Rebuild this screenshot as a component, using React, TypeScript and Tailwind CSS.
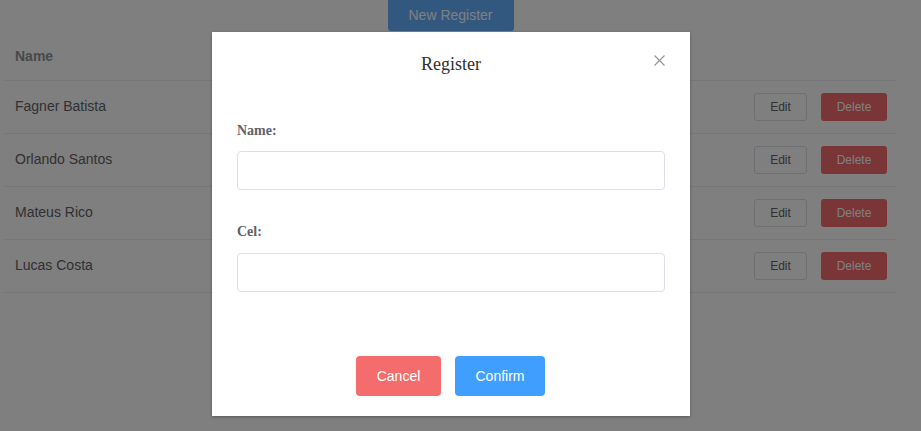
import React from 'react';

const people = ['Fagner Batista', 'Orlando Santos', 'Mateus Rico', 'Lucas Costa'];

export default function App() {
  return (
    <div className="relative h-[431px] w-[921px] overflow-hidden bg-white font-['Liberation_Sans',Arial,sans-serif]">
      {/* Page behind the modal */}
      <div className="ml-[4px] w-[893px]">
        <div className="flex justify-center">
          <button className="h-[31px] w-[126px] rounded-b-[3px] bg-[#66b1ff] text-[14px] text-white">
            New Register
          </button>
        </div>
        <table className="w-full border-collapse text-[14px]">
          <thead>
            <tr className="h-[49px] border-b border-[#ebeef5]">
              <th className="pl-[11px] pt-[2px] text-left font-bold text-[#909399]">Name</th>
              <th />
            </tr>
          </thead>
          <tbody>
            {people.map(name => (
              <tr key={name} className="h-[53px] border-b border-[#ebeef5]">
                <td className="pl-[11px] text-[#606266]">{name}</td>
                <td className="pr-[10px]">
                  <div className="flex items-center justify-end gap-[14px]">
                    <button className="h-[28px] w-[53px] rounded-[3px] border border-[#dcdfe6] bg-white text-[12px] text-[#606266]">
                      Edit
                    </button>
                    <button className="h-[28px] w-[66px] rounded-[3px] bg-[#f56c6c] text-[12px] text-white">
                      Delete
                    </button>
                  </div>
                </td>
              </tr>
            ))}
          </tbody>
        </table>
      </div>

      {/* Overlay + dialog */}
      <div className="absolute inset-0 flex justify-center bg-black/50 pr-[19px]">
        <div className="mt-[32px] flex h-[384px] w-[478px] flex-col bg-white px-[25px] pt-[20px] pb-[20px] shadow-[0_1px_3px_rgba(0,0,0,0.3)]">
          <div className="relative flex h-[24px] items-center justify-center">
            <h2 className="font-['Liberation_Serif','Times_New_Roman',serif] text-[18px] leading-[24px] text-[#303133]">
              Register
            </h2>
            <button className="absolute right-0 top-[2px] flex h-[12px] w-[12px] items-center justify-center">
              <svg width="11" height="11" viewBox="0 0 11 11" fill="none" stroke="#909399" strokeWidth="1.1">
                <path d="M0.5 0.5 L10.5 10.5 M10.5 0.5 L0.5 10.5" />
              </svg>
            </button>
          </div>

          <label className="mt-[44px] pt-[1px] font-['Liberation_Serif','Times_New_Roman',serif] text-[14px] font-bold leading-[19px] text-[#606266]">
            Name:
          </label>
          <input className="mt-[11px] h-[40px] w-full rounded-[4px] border border-[#dcdfe6] px-[15px] outline-none" />

          <label className="mt-[32px] font-['Liberation_Serif','Times_New_Roman',serif] text-[14px] font-bold leading-[20px] text-[#606266]">
            Cel:
          </label>
          <input className="mt-[11px] h-[40px] w-full rounded-[4px] border border-[#dcdfe6] px-[15px] outline-none" />

          <div className="mt-[64px] flex justify-center gap-[14px] pr-[1px]">
            <button className="h-[40px] w-[85px] rounded-[4px] bg-[#f56c6c] text-[14px] text-white">Cancel</button>
            <button className="h-[40px] w-[90px] rounded-[4px] bg-[#409eff] text-[14px] text-white">Confirm</button>
          </div>
        </div>
      </div>
    </div>
  );
}
